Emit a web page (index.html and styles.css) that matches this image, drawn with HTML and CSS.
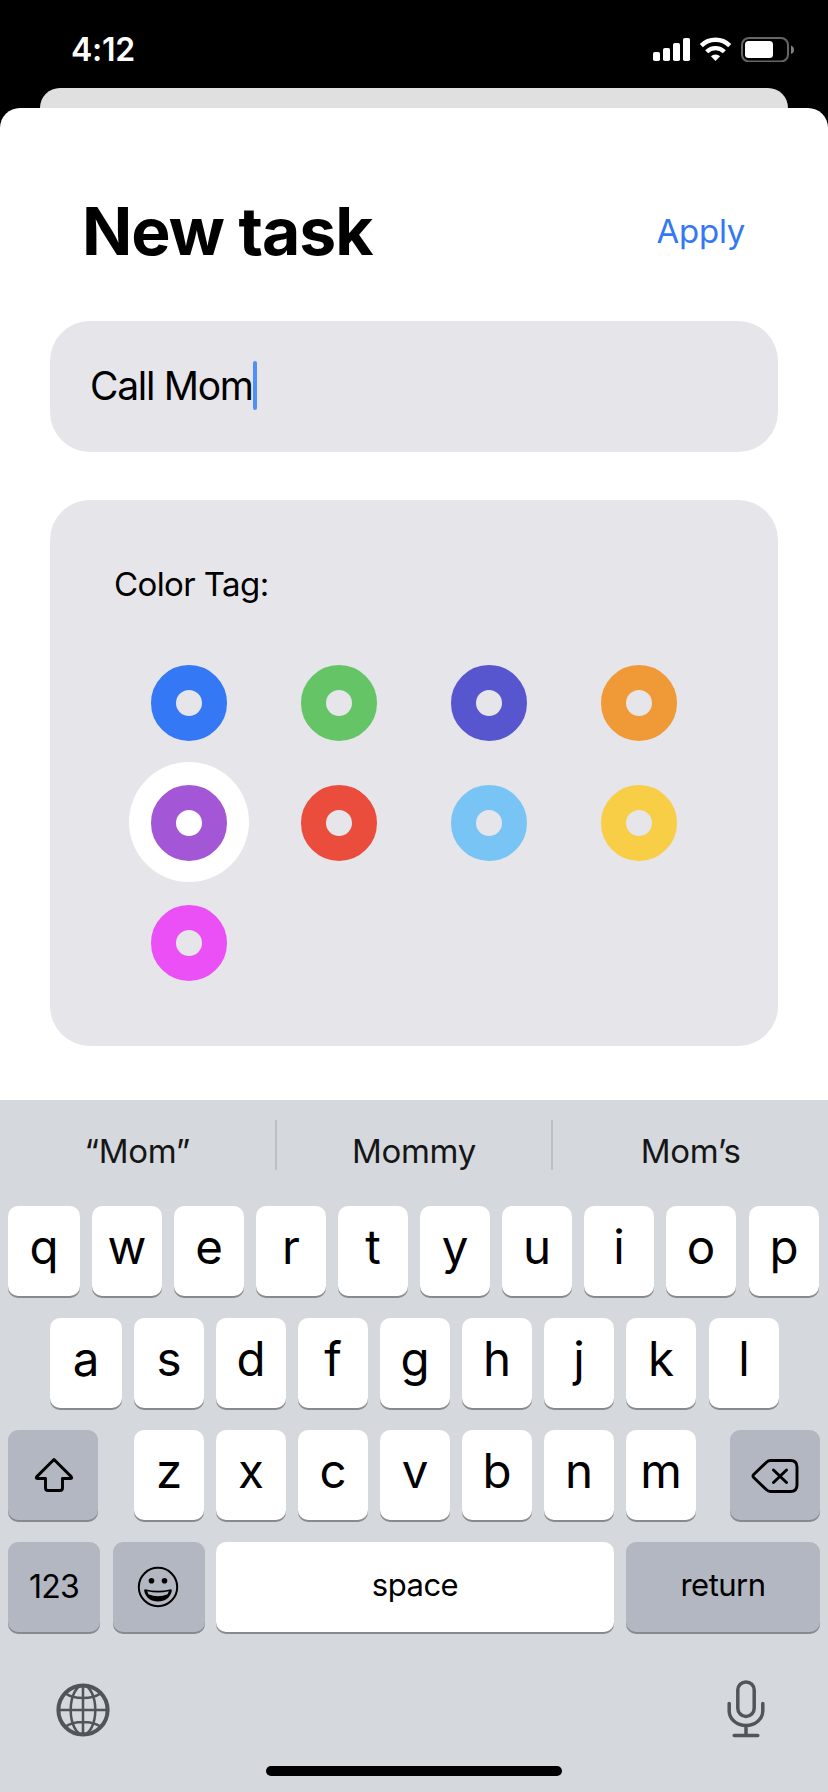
FILE: index.html
```html
<!DOCTYPE html>
<html lang="en">
<head>
<meta charset="utf-8">
<title>New task</title>
<link rel="stylesheet" href="styles.css">
</head>
<body>
<div class="status">
  <span class="time">4:12</span>
  <svg class="status-icons" width="142" height="26" viewBox="0 0 142 26">
    <g fill="#fff">
      <rect x="0" y="16" width="7" height="9" rx="1.8"/>
      <rect x="10" y="12" width="7" height="13" rx="1.8"/>
      <rect x="20" y="7" width="7" height="18" rx="1.8"/>
      <rect x="30" y="2" width="7" height="23" rx="1.8"/>
      <path d="M62.500 25l-4.600-4.700a6.500 6.500 0 0 1 9.200 0z"/>
    </g>
    <path d="M48.300 9.600a20.200 20.200 0 0 1 28.400 0M53.700 15.700a12.500 12.500 0 0 1 17.600 0" fill="none" stroke="#fff" stroke-width="4.400"/>
    <rect x="89" y="2" width="46" height="23.500" rx="7" fill="none" stroke="#666" stroke-width="2"/>
    <rect x="92" y="5" width="28" height="17" rx="3.500" fill="#fff"/>
    <path d="M138 9.500q3 1.200 3 4.300t-3 4.300z" fill="#808080"/>
  </svg>
</div>
<div class="sheet-behind"></div>
<main class="sheet">
  <header class="header">
    <h1 class="title">New task</h1>
    <span class="apply">Apply</span>
  </header>
  <div class="field"><span class="field-text">Call Mom</span><span class="caret"></span></div>
  <section class="panel">
    <div class="label">Color Tag:</div>
    <div class="swatches">
      <div class="swatch"><i class="ring blue"></i></div>
      <div class="swatch"><i class="ring green"></i></div>
      <div class="swatch"><i class="ring indigo"></i></div>
      <div class="swatch"><i class="ring orange"></i></div>
      <div class="swatch selected"><i class="ring purple"></i></div>
      <div class="swatch"><i class="ring red"></i></div>
      <div class="swatch"><i class="ring sky"></i></div>
      <div class="swatch"><i class="ring yellow"></i></div>
      <div class="swatch"><i class="ring pink"></i></div>
    </div>
  </section>
</main>
<section class="keyboard">
  <div class="suggestions">
    <span class="suggestion">“Mom”</span><i class="divider"></i>
    <span class="suggestion">Mommy</span><i class="divider"></i>
    <span class="suggestion">Mom’s</span>
  </div>
  <div class="row">
    <span class="key first">q</span><span class="key">w</span><span class="key">e</span><span class="key">r</span><span class="key">t</span><span class="key">y</span><span class="key">u</span><span class="key">i</span><span class="key">o</span><span class="key last">p</span>
  </div>
  <div class="row row-home">
    <span class="key first">a</span><span class="key">s</span><span class="key">d</span><span class="key">f</span><span class="key">g</span><span class="key">h</span><span class="key">j</span><span class="key">k</span><span class="key last">l</span>
  </div>
  <div class="row">
    <span class="key dark shift">
      <svg width="40" height="36" viewBox="0 0 40 36"><path d="M20 2.500L2.800 19.600q-1.400 1.700.7 1.900H11.500V31q0 2.500 2.500 2.500H26q2.500 0 2.500-2.500V21.500h8q2.100-.2.700-1.900z" fill="none" stroke="#000" stroke-width="2.900" stroke-linejoin="round"/></svg>
    </span>
    <span class="key">z</span><span class="key">x</span><span class="key">c</span><span class="key">v</span><span class="key">b</span><span class="key">n</span><span class="key">m</span>
    <span class="key dark delete">
      <svg width="48" height="36" viewBox="0 0 48 36" fill="none" stroke="#000" stroke-width="2.900" stroke-linecap="round" stroke-linejoin="round"><path d="M19.500 2.500H39.500q6.500 0 6.500 6.500V27q0 6.500-6.500 6.500H19.500q-2.200 0-4-1.700L2.700 19.500q-1.400-1.500 0-3L15.500 4.200q1.800-1.700 4-1.700zM22.500 12l13 12.500M35.500 12l-13 12.500"/></svg>
    </span>
  </div>
  <div class="row">
    <span class="key dark numbers">123</span>
    <span class="key dark emoji">
      <svg width="42" height="42" viewBox="0 0 42 42"><circle cx="21" cy="21" r="19.200" fill="none" stroke="#000" stroke-width="2"/><circle cx="14.500" cy="14.700" r="2.800"/><circle cx="27.500" cy="14.700" r="2.800"/><path d="M8 23.200q13 3 26 0q1 0 .8 1.500C33.500 31.500 28 35.500 21 35.500S8.500 31.500 7.200 24.700Q7 23.200 8 23.200z"/><path d="M10.200 25.300q10.800 2.400 21.600 0l-1.200 3q-9.600 4-19.200 0z" fill="#b3b7c1"/></svg>
    </span>
    <span class="key word space">space</span>
    <span class="key dark word return">return</span>
  </div>
  <div class="dock">
    <svg class="globe" width="54" height="54" viewBox="0 0 54 54" fill="none" stroke="#50555a" stroke-width="2.500"><circle cx="27" cy="27" r="24.600" stroke-width="4"/><ellipse cx="27" cy="27" rx="12.300" ry="24.500"/><path d="M27 2v50M2 27h50M9.500 10.500Q16 15 27 15t17.500-4.500M9.500 43.500Q16 39 27 39t17.500 4.500"/></svg>
    <svg class="mic" width="38" height="58" viewBox="0 0 38 58" fill="none" stroke="#50555a" stroke-width="3.500" stroke-linecap="round"><rect x="10.800" y="1.900" width="16.400" height="34.600" rx="8.200"/><path d="M2.200 23.500v7.500a16.800 14.500 0 0 0 33.600 0V23.500M19 45.500v10M7.200 55.500h23.600"/></svg>
  </div>
  <div class="home-bar"></div>
</section>
</body>
</html>
```
FILE: styles.css
```css
* { box-sizing: border-box; }

body {
  margin: 0;
  width: 828px;
  height: 1792px;
  overflow: hidden;
  display: flex;
  flex-direction: column;
  background: #000;
  color: #000;
  font-family: Inter, "Liberation Sans", sans-serif;
}

svg { display: block; flex: none; }

.status {
  height: 88px;
  padding: 30px 33px 0 71px;
  display: flex;
  justify-content: space-between;
  align-items: flex-start;
}
.time {
  color: #fff;
  font-size: 32px;
  font-weight: 600;
  line-height: 39px;
  letter-spacing: -0.3px;
}
.status-icons { margin-top: 6px; }

.sheet-behind {
  height: 40px;
  margin: 0 40px -20px;
  border-radius: 20px 20px 0 0;
  background: #e0e0e0;
}
.sheet {
  position: relative;
  height: 992px;
  padding: 83px 50px 0;
  border-radius: 20px 20px 0 0;
  background: #fff;
}
.header {
  height: 80px;
  padding: 0 33px 0 32px;
  display: flex;
  justify-content: space-between;
  align-items: center;
}
.title {
  margin: 0;
  font-size: 66px;
  font-weight: 700;
  line-height: 80px;
  letter-spacing: -1px;
}
.apply {
  color: #3478f6;
  font-size: 33px;
  line-height: 40px;
  letter-spacing: -0.3px;
}
.field {
  height: 131px;
  margin-top: 50px;
  padding: 0 40px 2px;
  display: flex;
  align-items: center;
  border-radius: 40px;
  background: #e5e5ea;
  font-size: 39px;
}
.field-text {
  padding-bottom: 1px;
  letter-spacing: -1.3px;
}
.caret {
  width: 4px;
  height: 49px;
  border-radius: 2px;
  background: #5090f5;
}
.panel {
  height: 546px;
  margin-top: 48px;
  padding: 64px;
  border-radius: 40px;
  background: #e5e5ea;
}
.label {
  font-size: 33px;
  line-height: 40px;
  letter-spacing: -0.6px;
}
.swatches {
  margin-top: 38px;
  display: grid;
  grid-template-columns: repeat(4, 150px);
  grid-auto-rows: 120px;
  justify-items: center;
}
.swatch {
  width: 120px;
  height: 120px;
  padding-top: 2px;
  display: flex;
  align-items: center;
  justify-content: center;
  border-radius: 50%;
}
.selected { background: #fff; }
.ring {
  width: 76px;
  height: 76px;
  border: 25px solid;
  border-radius: 50%;
}
.blue { color: #3478f6; }
.green { color: #65c466; }
.indigo { color: #5856ce; }
.orange { color: #f09a37; }
.purple { color: #a357d7; }
.red { color: #eb4d3d; }
.sky { color: #78c5f5; }
.yellow { color: #f7ce46; }
.pink { color: #eb50f7; }

.keyboard {
  height: 692px;
  padding: 20px 8px 0;
  background: #d5d8dd;
}
.suggestions {
  height: 50px;
  margin: 0 -8px 36px;
  display: flex;
}
.suggestion {
  flex: 1;
  padding-top: 11px;
  color: #161616;
  font-size: 33px;
  line-height: 40px;
  letter-spacing: -0.3px;
  text-align: center;
}
.divider {
  width: 2px;
  background: #bfc0c4;
}
.row {
  margin-bottom: 22px;
  display: flex;
  gap: 12px;
}
.row-home { padding-left: 42px; }
.key {
  flex: none;
  width: 70px;
  height: 90px;
  padding-bottom: 10px;
  display: flex;
  align-items: center;
  justify-content: center;
  border-radius: 10px;
  background: #fff;
  box-shadow: 0 2px 0 #898a8d;
  font-size: 47.5px;
  font-weight: 400;
}
.first { width: 72px; }
.last { margin-left: 1px; }
.dark { background: #b3b7c1; }
.shift {
  width: 90px;
  margin-right: 24px;
  padding: 0 0 0 2px;
}
.delete {
  width: 90px;
  margin-left: 22px;
  padding: 2px 0 0;
}
.numbers {
  width: 92px;
  padding-bottom: 1px;
  font-size: 32px;
  letter-spacing: -0.8px;
}
.emoji {
  width: 92px;
  margin: 0 -1px 0 1px;
  padding: 0 2px 0 0;
}
.word {
  padding-bottom: 5px;
  font-size: 31px;
  letter-spacing: -0.5px;
}
.space { width: 398px; }
.return { width: 194px; }
.dock {
  height: 112px;
  padding: 30px 55px 0 47px;
  display: flex;
  justify-content: space-between;
  align-items: flex-start;
}
.globe { margin: -1px 0 0 1px; }
.mic { margin-top: -4px; }
.home-bar {
  width: 296px;
  height: 10px;
  margin: 0 auto;
  border-radius: 5px;
  background: #000;
}
```
